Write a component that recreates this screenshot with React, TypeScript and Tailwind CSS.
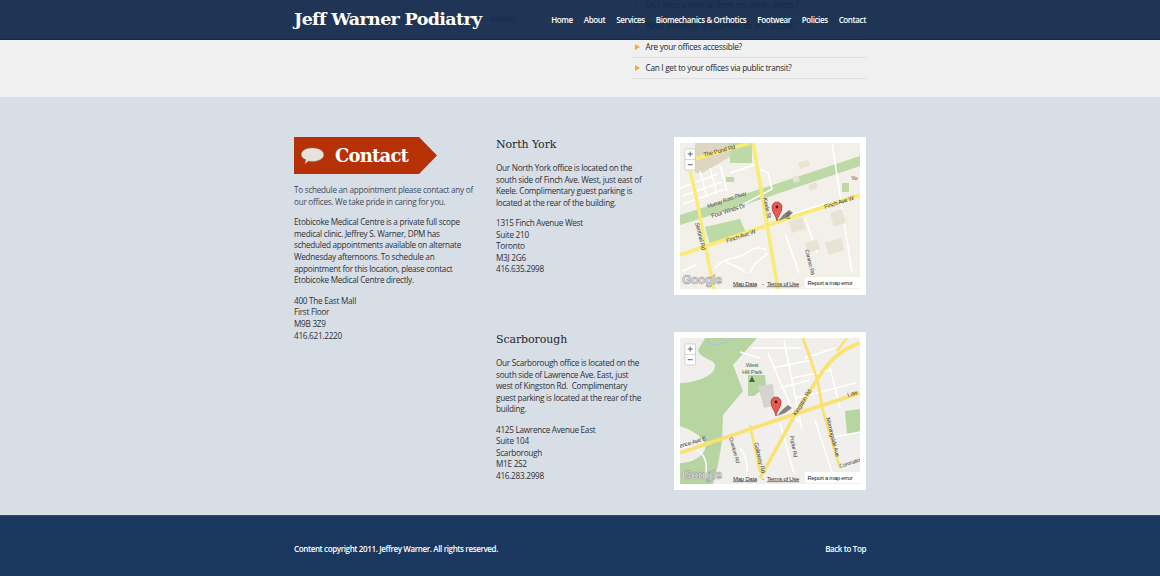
import React from "react";

const sans = "font-['Open_Sans',sans-serif]";
const slab = "font-['DejaVu_Serif',serif]";

function Pin({ x, y }: { x: number; y: number }) {
  return (
    <g transform={`translate(${x} ${y})`}>
      <path d="M1 0 L6 -6 L12 -11 L16 -8 L9 -3 Z" fill="#555" opacity="0.7" />
      <path d="M0 0 C-1 -6 -5 -8 -5 -14 A5 5 0 0 1 5 -14 C5 -8 1 -6 0 0 Z" fill="#ea5a50" stroke="#8c2a25" strokeWidth="0.6" />
      <circle cx="0" cy="-14" r="1.4" fill="#4a1210" />
    </g>
  );
}

function MapChrome() {
  return (
    <>
      <g>
        <rect x="5" y="6" width="10.5" height="21" rx="1.5" fill="#fff" stroke="#bbb" strokeWidth="0.6" />
        <line x1="5" y1="16.5" x2="15.5" y2="16.5" stroke="#bbb" strokeWidth="0.6" />
        <path d="M10.2 8.5v5M7.7 11h5M7.7 21.7h5" stroke="#666" strokeWidth="1" />
      </g>
      <text x="2" y="141" fontFamily="Liberation Sans, sans-serif" fontSize="12" fontWeight="700" fill="#e8e8e8" stroke="#8a8a8a" strokeWidth="0.5">Google</text>
      <rect x="125" y="134" width="55" height="11" fill="#fff" opacity="0.9" />
      <text x="127.5" y="142" fontFamily="Liberation Sans, sans-serif" fontSize="5.9" fill="#222">Report a map error</text>
      <text x="53" y="142.5" fontFamily="Liberation Sans, sans-serif" fontSize="6" fill="#333" textDecoration="underline">Map Data</text>
      <text x="82" y="142.5" fontFamily="Liberation Sans, sans-serif" fontSize="6" fill="#333">-</text>
      <text x="87" y="142.5" fontFamily="Liberation Sans, sans-serif" fontSize="6" fill="#333" textDecoration="underline">Terms of Use</text>
    </>
  );
}

function Label({ x, y, r, children, size = 6 }: { x: number; y: number; r: number; children: string; size?: number }) {
  return (
    <text transform={`translate(${x} ${y}) rotate(${r})`} fontFamily="Liberation Sans, sans-serif" fontSize={size} fill="#444">
      {children}
    </text>
  );
}

function NorthYorkMap() {
  return (
    <svg viewBox="0 0 180 146" className="block w-[180px] h-[146px]">
      <rect width="180" height="146" fill="#f2f0e9" />
      <path d="M15 0H50V14L22 30H15Z" fill="#ddd6c0" />
      <path d="M50 0H72V20L50 20Z" fill="#bcd9a6" />
      <path d="M0 72 L68 50 L180 13 V23 L70 60 L0 82 Z" fill="#bcd9a6" />
      <path d="M25 84L60 76L66 90L30 102Z" fill="#bcd9a6" />
      <rect x="162" y="40" width="7" height="9" fill="#bcd9a6" />
      <rect x="46" y="34" width="8" height="5" fill="#bcd9a6" />
      <path d="M0 45l38-14M2 53l40-14M3 61l42-15M10 32l7 26M20 28l7 26M30 25l7 26M40 22l7 26M50 30l30-10M62 62l30-16-4-16-8-4" stroke="#fff" strokeWidth="1.5" fill="none" />
      <path d="M35 125c10-12 22-8 30-14s14-8 22-4M70 130c4-12 12-14 18-20M45 118c6 6 16 4 20 12M105 90l14 40M125 75l12 35M152 0l20 130M100 75l50-16M2 128l14-6" stroke="#fff" strokeWidth="1.6" fill="none" />
      <path d="M108 78l14-4 4 12-14 4ZM125 100l12-4 3 10-12 4ZM150 70l12-4 4 14-12 4ZM145 100l16-5 3 12-15 5ZM118 20l10-3 2 6-10 3ZM112 34l6-2 2 6-6 2ZM128 42l8-3 2 6-8 3Z" fill="#e9e3d4" />
      <path d="M15 16 L70 0" stroke="#f9ec74" strokeWidth="3.4" fill="none" />
      <path d="M10 28 C18 55 26 110 34 146" stroke="#f9ec74" strokeWidth="3.4" fill="none" />
      <path d="M73 0 L98 146" stroke="#f9ec74" strokeWidth="3.6" fill="none" />
      <path d="M0 112 L88 82 L180 52" stroke="#f9ec74" strokeWidth="3.6" fill="none" />
      <Label x={24} y={14} r={-15}>The Pond Rd</Label>
      <Label x={32} y={75} r={-18}>Four Winds Dr</Label>
      <Label x={28} y={65} r={-19} size={5.4}>Murray Ross Pkwy</Label>
      <Label x={47} y={100} r={-19}>Finch Ave W</Label>
      <Label x={145} y={66} r={-18}>Finch Ave W</Label>
      <Label x={15} y={80} r={76}>Sentinel Rd</Label>
      <Label x={83} y={55} r={78}>Keele St</Label>
      <Label x={125} y={107} r={76} size={5.4}>Caramic Rd</Label>
      <Label x={106} y={70} r={85} size={5.4}>Rd</Label>
      <Label x={171} y={37} r={0}>Yo</Label>
      <Pin x={97} y={78} />
      <MapChrome />
    </svg>
  );
}

function ScarboroughMap() {
  return (
    <svg viewBox="0 0 180 146" className="block w-[180px] h-[146px]">
      <rect width="180" height="146" fill="#f0efeb" />
      <path d="M25 0H77L53 27L63 53L43 77L42 103L38 127L33 146H0V125C15 125 28 115 25 105C20 95 5 90 0 88V45C15 45 35 38 35 28C35 20 20 22 18 12Z" fill="#b7d5a0" />
      <path d="M68 37H85L86 48L74 58H68Z" fill="#b7d5a0" />
      <path d="M78 48L93 46L95 67L84 70Z" fill="#d6d4cf" />
      <path d="M165 73L180 71V95L167 96Z" fill="#b7d5a0" />
      <path d="M28 0c-2 8 8 8 16 5l10-5" stroke="#9cc4e4" strokeWidth="0.9" fill="none" />
      <path d="M60 110c6 8 10 20 4 36M100 85l14 50M72 10l50 0M88 15l30 70M104 2l18 90M125 20l30-10M112 40l40-8M116 60l60-15M135 82l20 62M150 100l30-6M0 110c20-4 30 10 25 30M60 14l20 6M92 30l40-8M100 50l30-8M150 30l10 40" stroke="#fff" strokeWidth="1.5" fill="none" />
      <path d="M0 115 L97 82 L180 55" stroke="#fae271" strokeWidth="3.6" fill="none" />
      <path d="M80 140 L115 77 L137 42 C145 28 158 12 180 5" stroke="#fae271" strokeWidth="3.6" fill="none" />
      <path d="M123 0 L137 40 L143 73 L160 130" stroke="#fae271" strokeWidth="2.8" fill="none" />
      <path d="M70 87 L80 134" stroke="#fae271" strokeWidth="2.8" fill="none" />
      <path d="M157 13L167 0" stroke="#fae271" strokeWidth="2.4" fill="none" />
      <Label x={0} y={110} r={-17}>ence Ave E</Label>
      <Label x={116} y={78} r={-58}>Kingston Rd</Label>
      <Label x={168} y={59} r={-17}>Law</Label>
      <Label x={146} y={80} r={76}>Morningside Ave</Label>
      <Label x={74} y={105} r={76}>Galloway Rd</Label>
      <Label x={49} y={100} r={74} size={5.4}>Overture Rd</Label>
      <Label x={110} y={98} r={80} size={5.4}>Poplar Rd</Label>
      <Label x={160} y={130} r={-18} size={5.4}>Coronation</Label>
      <text x="72" y="29" textAnchor="middle" fontFamily="Liberation Sans, sans-serif" fontSize="6" fill="#3f6b3a">West</text>
      <text x="72" y="36" textAnchor="middle" fontFamily="Liberation Sans, sans-serif" fontSize="6" fill="#3f6b3a">Hill Park</text>
      <path d="M72 38l3 6h-6Z" fill="#3f6b3a" />
      <Pin x={96} y={78} />
      <MapChrome />
    </svg>
  );
}

function MapFrame({ children }: { children: React.ReactNode }) {
  return <div className="bg-white p-[6px] w-[192px] h-[158px] shrink-0">{children}</div>;
}

function Office({ title, text, lines, map }: { title: string; text: string; lines: string[]; map: React.ReactNode }) {
  return (
    <div className="flex justify-between h-[158px]">
      <div className="w-[148px]">
        <h3 className={`${slab} text-[11px] leading-[15px] tracking-[-0.1px] text-[#22262c] mb-[10px]`}>{title}</h3>
        <p className="mb-[8.6px]">{text}</p>
        <p>
          {lines.map((l) => (
            <span key={l} className="block">{l}</span>
          ))}
        </p>
      </div>
      <MapFrame>{map}</MapFrame>
    </div>
  );
}

const nav = ["Home", "About", "Services", "Biomechanics & Orthotics", "Footwear", "Policies", "Contact"];
const faq = [
  "Do I need a referral from my family doctor?",
  "What methods of payment do you accept?",
  "Are your offices accessible?",
  "Can I get to your offices via public transit?",
];

export default function App() {
  return (
    <div className={`${sans} relative w-[1160px] h-[576px] overflow-hidden text-[8.2px] leading-[11.6px] tracking-[-0.27px] text-[#2c3138] bg-[#d8dee6]`}>
      <nav className="absolute top-0 left-0 right-0 h-[40px] bg-[#142a4c]/[0.95] border-b border-[#1a2a44] z-10">
        <div className="w-[572px] mx-auto h-full flex items-center justify-between">
          <span className={`${slab} font-bold text-[17.5px] leading-none tracking-[-0.65px] text-white whitespace-nowrap`}>Jeff Warner Podiatry</span>
          <div className="flex gap-[11px] font-semibold text-white text-[8px] tracking-[-0.38px]">
            {nav.map((n) => (
              <a key={n} className="whitespace-nowrap">{n}</a>
            ))}
          </div>
        </div>
      </nav>

      <section className="h-[97px] bg-[#f0f0f0] overflow-hidden">
        <div className="w-[572px] mx-auto flex justify-between">
          <p className="pt-[13px] pl-[196px] text-[#22262c]">directly.</p>
          <ul className="w-[233px] -mt-[5px] text-[#22262c]">
            {faq.map((q) => (
              <li key={q} className="h-[21px] flex items-center gap-[6px] border-b border-[#dfdfdf] pl-[1.5px]">
                <span className="w-0 h-0 border-y-[3.5px] border-y-transparent border-l-[5px] border-l-[#f4a83a]" />
                <span>{q}</span>
              </li>
            ))}
          </ul>
        </div>
      </section>

      <main className="h-[418px] pt-[40px]">
        <div className="w-[572px] mx-auto flex justify-between">
          <div className="w-[181px]">
            <div className="relative w-[143px] h-[37px] bg-[#b73107] [clip-path:polygon(0_0,125px_0,100%_50%,125px_100%,0_100%)] flex items-center mb-[10px]">
              <svg viewBox="0 0 28 20" className="absolute left-[6px] top-[10px] w-[26px] h-[18px]">
                <path d="M13 1C20 1 26 4 26 8.5S20 16 13 16C11.5 16 10 15.8 9 15.5L5 19L6 14C3 12.8 1 11 1 8.5C1 4 6 1 13 1Z" fill="#e7e2da" stroke="#8b8378" strokeWidth="0.5" />
              </svg>
              <span className={`${slab} font-bold ml-[41px] text-[18px] leading-none tracking-[-0.8px] text-white`}>Contact</span>
            </div>
            <p className="mb-[9px] text-[#3e4b60]">To schedule an appointment please contact any of our offices. We take pride in caring for you.</p>
            <p className="mb-[9px]">Etobicoke Medical Centre is a private full scope medical clinic. Jeffrey S. Warner, DPM has scheduled appointments available on alternate Wednesday afternoons. To schedule an appointment for this location, please contact Etobicoke Medical Centre directly.</p>
            <p>
              <span className="block">400 The East Mall</span>
              <span className="block">First Floor</span>
              <span className="block">M9B 3Z9</span>
              <span className="block">416.621.2220</span>
            </p>
          </div>
          <div className="w-[370px] flex flex-col gap-[37px]">
            <Office
              title="North York"
              text="Our North York office is located on the south side of Finch Ave. West, just east of Keele. Complimentary guest parking is located at the rear of the building."
              lines={["1315 Finch Avenue West", "Suite 210", "Toronto", "M3J 2G6", "416.635.2998"]}
              map={<NorthYorkMap />}
            />
            <Office
              title="Scarborough"
              text={"Our Scarborough office is located on the south side of Lawrence Ave. East, just west of Kingston Rd.\u00a0 Complimentary guest parking is located at the rear of the building."}
              lines={["4125 Lawrence Avenue East", "Suite 104", "Scarborough", "M1E 2S2", "416.283.2998"]}
              map={<ScarboroughMap />}
            />
          </div>
        </div>
      </main>

      <footer className="h-[61px] bg-[#1a385f] border-t border-[#2d4a6d]">
        <div className="w-[572px] mx-auto h-full flex items-center justify-between font-semibold text-white text-[8px] tracking-[-0.38px] pt-[5px]">
          <span>Content copyright 2011. Jeffrey Warner. All rights reserved.</span>
          <a>Back to Top</a>
        </div>
      </footer>
    </div>
  );
}
